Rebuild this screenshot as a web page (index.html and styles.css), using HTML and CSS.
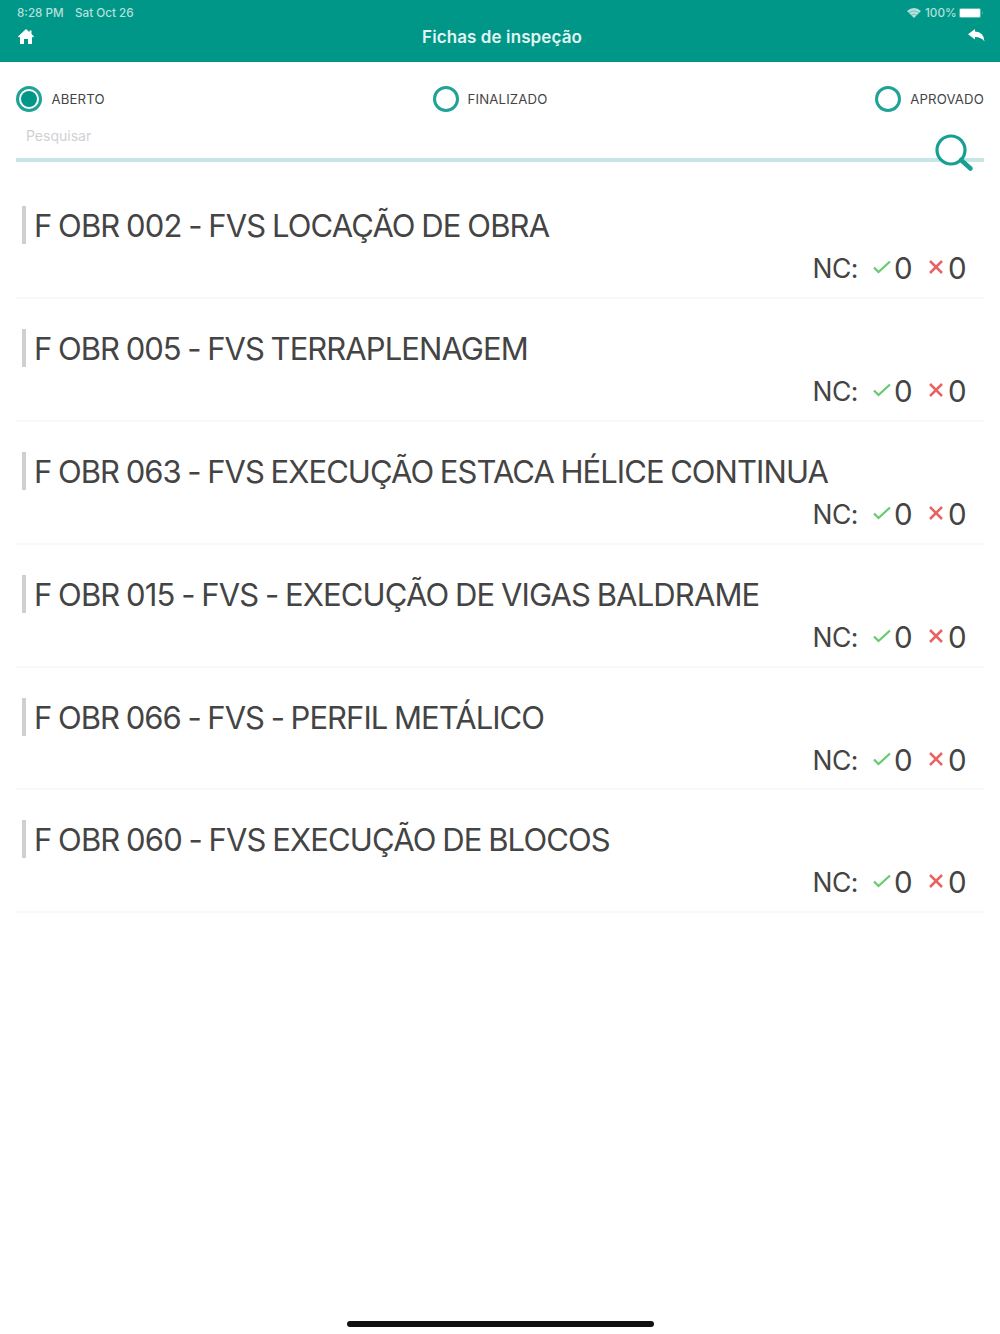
FILE: index.html
```html
<!DOCTYPE html>
<html lang="pt-BR">
<head>
<meta charset="utf-8">
<title>Fichas de inspeção</title>
<link rel="stylesheet" href="styles.css">
</head>
<body>
<svg class="defs" width="0" height="0">
  <symbol id="check" viewBox="0 0 18 16"><path d="M1 8.5 5.5 13 17 2.5"/></symbol>
  <symbol id="cross" viewBox="0 0 16 16"><path d="M2 2 14 14M14 2 2 14"/></symbol>
</svg>
<div class="screen">
  <header class="topbar">
    <div class="status">
      <div class="status-left"><span class="time">8:28 PM</span><span class="date">Sat Oct 26</span></div>
      <div class="status-right">
        <svg class="wifi" width="14" height="10" viewBox="0 0 14 10"><path d="M0 3Q7-3 14 3L7 10Z" fill="currentColor"/><path d="M2 5Q7 1 12 5M4 7.300Q7 5 10 7.300" fill="none" stroke="#009688" stroke-width=".4"/></svg>
        <span class="percent">100%</span>
        <svg class="battery" width="25" height="10" viewBox="0 0 25 10"><rect width="22" height="10" rx="2" fill="#5cbcb3"/><rect x="1" y="1" width="20" height="8" rx="1" fill="#fff"/><path d="M23 3.500q1.500 1.500 0 3z" fill="#8fd0c9"/></svg>
      </div>
    </div>
    <nav class="nav">
      <svg class="home" width="16" height="15" viewBox="0 0 16 15"><path d="M8 0 0 7.500 1 8.500 2 7.800V15H6V10H10V15H14V7.800L15 8.500 16 7.500 13.500 5V1.500H11.500V3.200Z" fill="#fff"/></svg>
      <h1>Fichas de inspeção</h1>
      <svg class="back" width="17" height="13" viewBox="0 0 17 13"><path d="M0 5.200 7 0V2.500Q16 3 16.500 12.500 13.500 8 7 8V10.500Z" fill="#fff"/></svg>
    </nav>
  </header>
  <main>
    <div class="filters">
      <div class="filter"><span class="radio selected"></span><span class="label">ABERTO</span></div>
      <div class="filter"><span class="radio"></span><span class="label">FINALIZADO</span></div>
      <div class="filter"><span class="radio"></span><span class="label">APROVADO</span></div>
    </div>
    <div class="search">
      <span class="placeholder">Pesquisar</span>
      <svg class="magnifier" width="40" height="40" viewBox="0 0 40 40"><circle cx="17" cy="17" r="14" fill="#fff"/><path d="M27 27 36.500 35.500" stroke-width="4.500"/><circle cx="17" cy="17" r="14" fill="none" stroke-width="3.200"/></svg>
    </div>
    <ul class="list">
      <li class="row"><h2>F OBR 002 - FVS LOCAÇÃO DE OBRA</h2><div class="counts"><span class="nc">NC:</span><svg class="check"><use href="#check"/></svg><span class="num ok">0</span><svg class="cross"><use href="#cross"/></svg><span class="num">0</span></div></li>
      <li class="row"><h2 class="tight">F OBR 005 - FVS TERRAPLENAGEM</h2><div class="counts"><span class="nc">NC:</span><svg class="check"><use href="#check"/></svg><span class="num ok">0</span><svg class="cross"><use href="#cross"/></svg><span class="num">0</span></div></li>
      <li class="row"><h2 class="tight">F OBR 063 - FVS EXECUÇÃO ESTACA HÉLICE CONTINUA</h2><div class="counts"><span class="nc">NC:</span><svg class="check"><use href="#check"/></svg><span class="num ok">0</span><svg class="cross"><use href="#cross"/></svg><span class="num">0</span></div></li>
      <li class="row"><h2>F OBR 015 - FVS - EXECUÇÃO DE VIGAS BALDRAME</h2><div class="counts"><span class="nc">NC:</span><svg class="check"><use href="#check"/></svg><span class="num ok">0</span><svg class="cross"><use href="#cross"/></svg><span class="num">0</span></div></li>
      <li class="row"><h2 class="tight">F OBR 066 - FVS - PERFIL METÁLICO</h2><div class="counts"><span class="nc">NC:</span><svg class="check"><use href="#check"/></svg><span class="num ok">0</span><svg class="cross"><use href="#cross"/></svg><span class="num">0</span></div></li>
      <li class="row"><h2>F OBR 060 - FVS EXECUÇÃO DE BLOCOS</h2><div class="counts"><span class="nc">NC:</span><svg class="check"><use href="#check"/></svg><span class="num ok">0</span><svg class="cross"><use href="#cross"/></svg><span class="num">0</span></div></li>
    </ul>
  </main>
  <div class="home-indicator"></div>
</div>
</body>
</html>
```
FILE: styles.css
```css
* { box-sizing: border-box; }
body { margin: 0; background: #fff; font-family: Inter, "Liberation Sans", sans-serif; color: #444; }
.defs { display: block; position: absolute; }
.screen { width: 1000px; height: 1334px; display: flex; flex-direction: column; overflow: hidden; }
svg { flex: none; }
h1, h2, ul { margin: 0; padding: 0; font-weight: 400; }
.topbar { height: 62px; background: #009688; color: #fff; flex: none; }
.status { height: 26px; padding: 0 16px 0 17px; display: flex; justify-content: space-between; align-items: center; font-size: 11.7px; font-weight: 500; color: #b5e0dc; }
.status-left, .status-right { display: flex; align-items: center; white-space: nowrap; }
.time { width: 58px; }
.percent { width: 30px; margin: 0 4px 0 4px; }
.nav { height: 22px; padding: 0 15px 0 18px; display: flex; align-items: center; justify-content: space-between; }
.home { margin-bottom: 2px; }
.back { margin-bottom: 3px; }
h1 { font-size: 17px; line-height: 22px; font-weight: 600; letter-spacing: 0.1px; margin-left: 2px; color: #e0f4f1; white-space: nowrap; }
main { padding: 0 16px; }
.filters { height: 74px; display: flex; justify-content: space-between; align-items: center; }
.filter { display: flex; align-items: center; gap: 9px; height: 26px; font-size: 13.2px; color: #444; }
.filter:first-child { margin-left: -0.5px; gap: 10px; }
.radio { width: 26px; height: 26px; border: 3px solid #1fa397; border-radius: 50%; display: flex; align-items: center; justify-content: center; }
.radio.selected::after { content: ""; width: 16px; height: 16px; border-radius: 50%; background: #009688; }
.label { white-space: nowrap; letter-spacing: 0.15px; }
.search { height: 26px; border-bottom: 4px solid #c4e7e3; position: relative; display: flex; padding-left: 10px; }
.placeholder { font-size: 14px; line-height: 16px; margin-top: -8px; color: #d0d0d3; }
.magnifier { position: absolute; right: 10px; top: -3px; stroke: #179f93; stroke-linecap: round; }
.list { list-style: none; padding-top: 14px; }
.row { height: 122.9px; padding: 30px 17px 0 6px; border-bottom: 2px solid #f9f9f9; }
h2 { height: 38px; border-left: 4px solid #d0d0d0; padding-left: 8px; font-size: 31px; line-height: 40px; letter-spacing: -0.86px; word-spacing: -1.2px; white-space: nowrap; }
.tight { letter-spacing: -0.94px; }
.counts { height: 38px; margin-top: 5px; display: flex; justify-content: flex-end; align-items: center; font-size: 29.5px; line-height: 38px; }
.nc { font-size: 26.5px; margin-right: 15px; letter-spacing: -0.5px; }
.num { width: 19px; }
.ok { margin-right: 15px; }
.check { width: 18px; height: 16px; margin: 0 3px 2px 0; stroke: #69cb70; stroke-width: 2.3; fill: none; }
.cross { width: 16px; height: 16px; margin: 0 4px 2px 0; stroke: #e76363; stroke-width: 2.5; fill: none; }
.home-indicator { width: 307px; height: 6px; border-radius: 3px; background: #111; margin: auto auto 7px; }
```
